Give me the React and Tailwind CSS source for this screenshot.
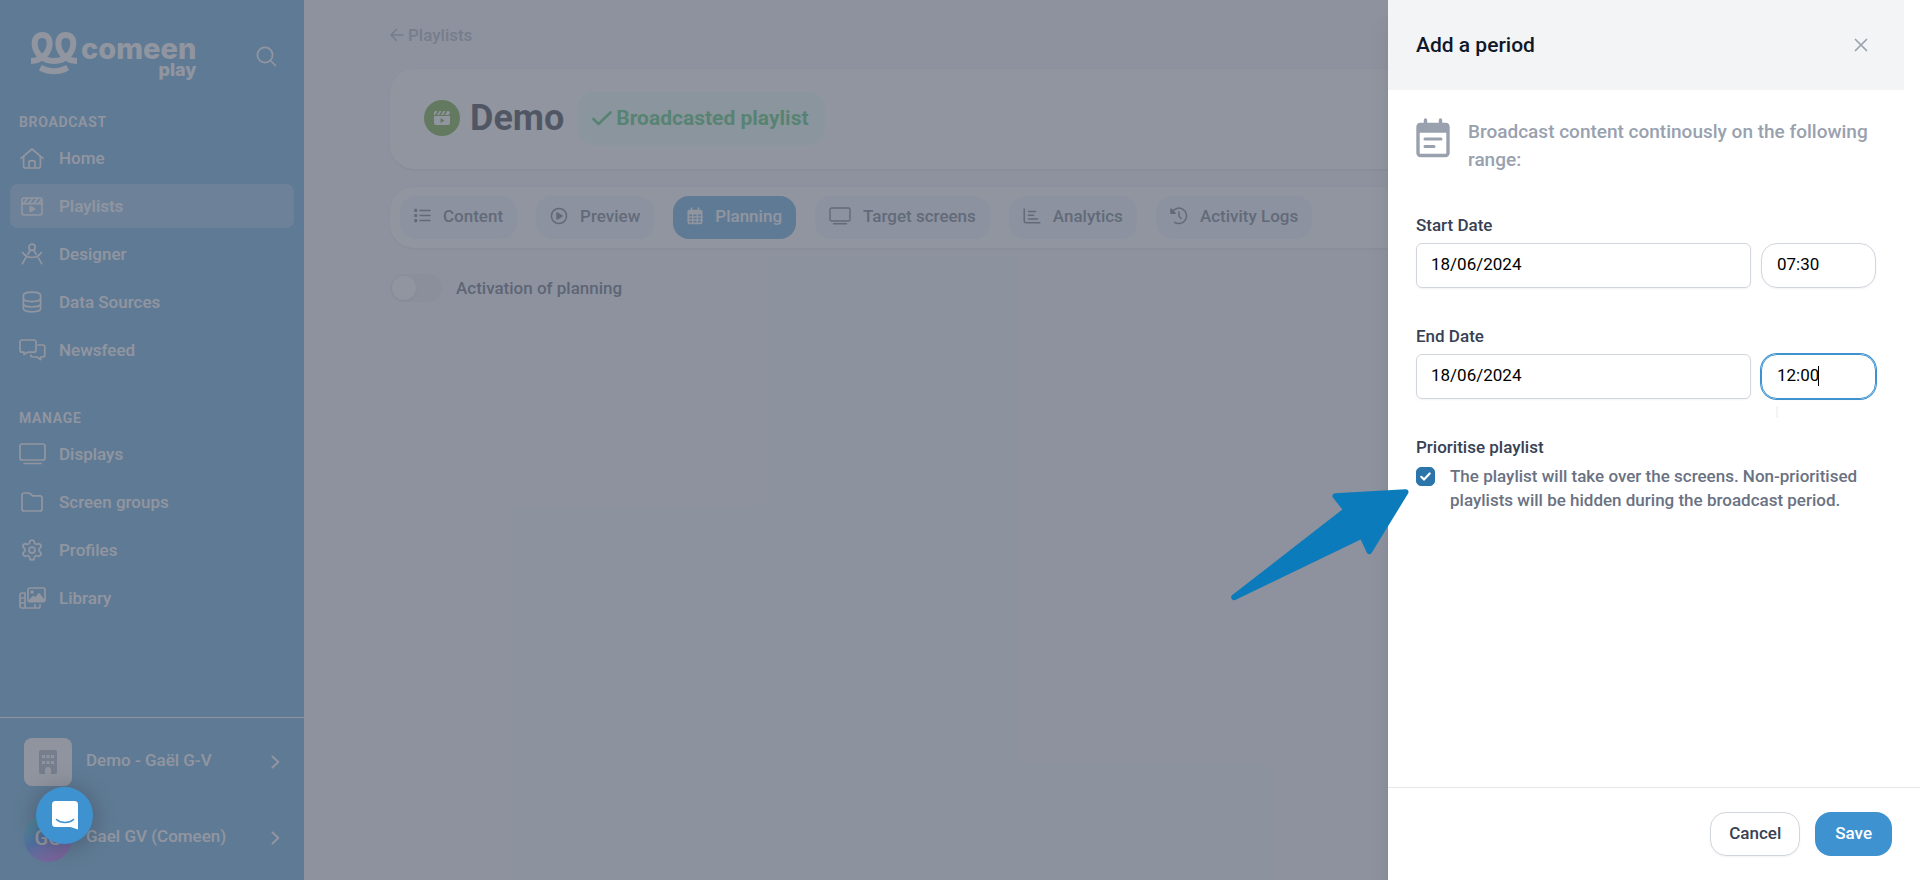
import { useState } from 'react'
import { Settings } from 'lucide-react'
import clsx from 'clsx'

function Svg({ w, h, stroke = 1.7, className, children }) {
  return (
    <svg
      width={w}
      height={h}
      viewBox={`0 0 ${w} ${h}`}
      fill="none"
      stroke="currentColor"
      strokeWidth={stroke}
      strokeLinecap="round"
      strokeLinejoin="round"
      className={clsx('shrink-0', className)}
      aria-hidden="true"
    >
      {children}
    </svg>
  )
}

const HomeIcon = () => (
  <Svg w={24} h={21}>
    <path d="M1 10.3 12 1l11 9.3" />
    <path d="M3.6 8.6V18a2 2 0 0 0 2 2h12.8a2 2 0 0 0 2-2V8.6" />
    <path d="M9 20v-6.2a1 1 0 0 1 1-1h4a1 1 0 0 1 1 1V20" />
  </Svg>
)

const ClapperIcon = () => (
  <Svg w={22} h={19}>
    <rect x="1" y="1" width="20" height="17" rx="2.2" />
    <path d="M1 6.6h20M3 6 6.6 1.4M8 6l3.6-4.6M13 6l3.6-4.6M18 6l2.6-3.4" />
    <path d="M9.3 9.6v5l4.2-2.5z" fill="currentColor" />
  </Svg>
)

const CompassIcon = () => (
  <Svg w={22} h={22}>
    <circle cx="11" cy="4.2" r="3.1" />
    <path d="M9.4 7 6.8 11.2M12.6 7l2.6 4.2M5 14.4 1.3 20.7M17.3 14.8l3.4 5.9M1.6 9.4c4.2 6.8 14.6 6.8 18.8 0" />
  </Svg>
)

const DatabaseIcon = () => (
  <Svg w={20} h={22}>
    <path d="M1.4 4.2c0-1.7 3.8-3 8.6-3s8.6 1.3 8.6 3v13.6c0 1.7-3.8 3-8.6 3s-8.6-1.3-8.6-3z" />
    <path d="M1.4 7.6c0 1.7 3.8 3 8.6 3s8.6-1.3 8.6-3M1.4 13c0 1.7 3.8 3 8.6 3s8.6-1.3 8.6-3" />
  </Svg>
)

const CommentsIcon = () => (
  <Svg w={27} h={22}>
    <path d="M3 1h12a2 2 0 0 1 2 2v8.2a2 2 0 0 1-2 2H8.6L5 15.6v-2.4H3a2 2 0 0 1-2-2V3a2 2 0 0 1 2-2z" />
    <path d="M19 6h4.800a2 2 0 0 1 2 2v8a2 2 0 0 1-2 2h-2.200v2.600L18 18h-4.400a2 2 0 0 1-1.900-2" />
  </Svg>
)

const ScreenIcon = () => (
  <Svg w={27} h={22}>
    <rect x="1" y="1" width="25" height="16" rx="2" />
    <path d="M5 20.5h17" />
  </Svg>
)

const FolderIcon = () => (
  <Svg w={22} h={20}>
    <path d="M3 1h4.800a2 2 0 0 1 1.400.600l1.600 1.600a2 2 0 0 0 1.400.600H19a2 2 0 0 1 2 2V17a2 2 0 0 1-2 2H3a2 2 0 0 1-2-2V3a2 2 0 0 1 2-2z" />
  </Svg>
)

const LibraryIcon = () => (
  <Svg w={27} h={22}>
    <rect x="9" y="1" width="17" height="13.6" rx="1.8" />
    <circle cx="13" cy="5" r=".9" fill="currentColor" />
    <path d="m10.400 13.600 4-4 2 1.800 3.600-4.600 5.200 6.800z" fill="currentColor" />
    <path d="M6 6H2.800A1.800 1.800 0 0 0 1 7.800v11.400A1.800 1.800 0 0 0 2.800 21h16.400a1.800 1.800 0 0 0 1.800-1.800V17.600M6 6v15M1.500 11H6M1.500 16H6M16 17.600V21" />
  </Svg>
)

const ListIcon = () => (
  <Svg w={17} h={15} stroke={1.5}>
    <path d="M6 2.500h10M6 7.500h10M6 12.500h10" />
    <path d="M1 1.600h1.400v1.600H1zM1 6.700h1.400v1.600H1zM1 11.800h1.400v1.600H1z" fill="currentColor" />
  </Svg>
)

const PlayIcon = () => (
  <Svg w={18} h={18} stroke={1.5}>
    <circle cx="9" cy="9" r="7.6" />
    <path d="M7 6v6l5-3z" fill="currentColor" />
  </Svg>
)

const CalendarIcon = () => (
  <Svg w={16} h={18} stroke={1.6}>
    <path d="M4.5 1v3M11.5 1v3" />
    <rect x="1.3" y="3.6" width="13.4" height="12.8" rx="1.4" />
    <path d="M1.500 4h13v2.600h-13z" fill="currentColor" />
    <path d="M1.300 10h13.400M1.300 13h13.400M5.800 7v9M10.200 7v9" strokeWidth="1.4" />
  </Svg>
)

const ScreenSmallIcon = () => (
  <Svg w={22} h={18} stroke={1.4}>
    <rect x="1" y="1" width="20" height="13" rx="1.6" />
    <path d="M4.500 16.800h13" />
  </Svg>
)

const ChartIcon = () => (
  <Svg w={18} h={16} stroke={1.5}>
    <path d="M1.200 1v11.800a2 2 0 0 0 2 2h13.600M5.500 3.500h7M5.500 7.200h5M5.500 11h9" />
  </Svg>
)

const HistoryIcon = () => (
  <Svg w={18} h={18} stroke={1.5}>
    <path d="M2 5.200A7.700 7.700 0 1 1 4.600 15.300M9 5v4.300l2.200 2.200" />
    <path d="M1 2v4.200h4.200z" fill="currentColor" />
  </Svg>
)

const ChevronIcon = () => (
  <Svg w={9} h={14} stroke={2}>
    <path d="m1.500 1.500 5.800 5.500-5.800 5.500" />
  </Svg>
)

const Logo = () => (
  <div className="flex items-start gap-1 text-white">
    <svg width="46" height="43" viewBox="0 0 138 129" fill="none" stroke="currentColor" strokeWidth="18" aria-hidden="true">
      <path d="M0 87C32 87 56 62 56 34C56 18 47 9 34 9S11 18 11 34C11 62 34 87 69 87S127 62 127 34C127 18 118 9 104 9S82 18 82 34C82 62 106 87 138 87" />
      <path d="M28 107C52 121 86 121 110 107" />
    </svg>
    <div className="flex flex-col items-end pt-0.5 font-[Inter] font-extrabold">
      <span className="text-[29px] leading-[30px]">comeen</span>
      <span className="-mt-1 text-lg leading-5">play</span>
    </div>
  </div>
)

const broadcast = [
  { label: 'Home', icon: <HomeIcon /> },
  { label: 'Playlists', icon: <ClapperIcon />, active: true },
  { label: 'Designer', icon: <CompassIcon /> },
  { label: 'Data Sources', icon: <DatabaseIcon /> },
  { label: 'Newsfeed', icon: <CommentsIcon /> },
]

const manage = [
  { label: 'Displays', icon: <ScreenIcon /> },
  { label: 'Screen groups', icon: <FolderIcon /> },
  { label: 'Profiles', icon: <Settings size={24} strokeWidth={1.75} /> },
  { label: 'Library', icon: <LibraryIcon /> },
]

const tabs = [
  { label: 'Content', icon: <ListIcon /> },
  { label: 'Preview', icon: <PlayIcon /> },
  { label: 'Planning', icon: <CalendarIcon />, active: true },
  { label: 'Target screens', icon: <ScreenSmallIcon /> },
  { label: 'Analytics', icon: <ChartIcon /> },
  { label: 'Activity Logs', icon: <HistoryIcon /> },
]

function NavGroup({ title, items, className }) {
  return (
    <div className={className}>
      <h2 className="px-[9px] text-sm font-semibold uppercase tracking-wider text-white">{title}</h2>
      <ul className="mt-1 flex flex-col gap-1">
        {items.map((item) => (
          <li key={item.label}>
            <a
              href="#"
              className={clsx(
                'flex h-11 items-center gap-3.5 rounded-lg px-[9px] text-white',
                item.active && 'bg-[#74b5e4]'
              )}
            >
              <span className="flex w-[26px] justify-center">{item.icon}</span>
              {item.label}
            </a>
          </li>
        ))}
      </ul>
    </div>
  )
}

function Sidebar() {
  return (
    <aside className="flex w-[304px] shrink-0 flex-col bg-[#3f92d0] font-medium text-white">
      <div className="flex h-[76px] items-start justify-between pt-8 pr-[27px] pl-[31px]">
        <Logo />
        <button aria-label="Search" className="mt-3.5">
          <Svg w={21} h={21} stroke={1.7}>
            <circle cx="9" cy="9" r="7.6" />
            <path d="m14.500 14.500 5 5" />
          </Svg>
        </button>
      </div>
      <nav className="flex-1 px-2.5 pt-9">
        <NavGroup title="Broadcast" items={broadcast} />
        <NavGroup title="Manage" items={manage} className="mt-9" />
      </nav>
      <div className="flex flex-col gap-7 border-t border-white px-6 pt-5 pb-[18px]">
        <button className="flex h-12 items-center gap-3.5 text-left">
          <span className="flex size-12 items-center justify-center rounded-lg bg-gray-50 text-gray-400">
            <svg width="18" height="24" viewBox="0 0 18 24" fill="currentColor" fillRule="evenodd" aria-hidden="true">
              <path d="M2 0h14a2 2 0 0 1 2 2v20a2 2 0 0 1-2 2h-4v-4a3 3 0 0 0-6 0v4H2a2 2 0 0 1-2-2V2a2 2 0 0 1 2-2zM3 5v3h3V5zm4.500 0v3h3V5zM12 5v3h3V5zM3 11v3h3v-3zm4.500 0v3h3v-3zm4.500 0v3h3v-3z" />
            </svg>
          </span>
          <span className="flex-1 pb-1">Demo - Gaël G-V</span>
          <ChevronIcon />
        </button>
        <button className="flex h-12 items-center gap-3.5 text-left">
          <span className="flex size-12 items-center justify-center rounded-full bg-linear-150 from-teal-400 via-blue-600 to-fuchsia-600 text-xl">GG</span>
          <span className="flex-1 pb-1">Gael GV (Comeen)</span>
          <ChevronIcon />
        </button>
      </div>
    </aside>
  )
}

function Main() {
  return (
    <main className="min-w-0 flex-1 bg-gray-100 px-[86px] pt-[23px] font-medium">
      <a href="#" className="flex items-center gap-1 text-gray-400">
        <Svg w={14} h={14} stroke={1.7}>
          <path d="M13 7H1M6.500 1.500 1 7l5.500 5.500" />
        </Svg>
        Playlists
      </a>

      <section className="mt-[22px] flex h-25 items-center rounded-3xl bg-white px-[34px] pb-0.5 shadow-sm">
        <span className="flex size-9 items-center justify-center rounded-full bg-[#509200] text-white">
          <svg width="16" height="14" viewBox="0 0 16 14" fill="currentColor" fillRule="evenodd" aria-hidden="true">
            <path d="M2 0h1.500L1 4H0V2a2 2 0 0 1 2-2zM5.500 0h2L5 4H3zM9.500 0h2L9 4H7zM13.500 0h.500a2 2 0 0 1 2 1.500L14.500 4H11zM0 5h16v7a2 2 0 0 1-2 2H2a2 2 0 0 1-2-2zM6.500 7v5l4-2.500z" />
          </svg>
        </span>
        <h1 className="ml-2.5 text-4xl font-bold text-gray-950">Demo</h1>
        <span className="ml-3.5 flex h-[53px] items-center gap-1 rounded-2xl bg-emerald-50 pr-4 pl-3.5 text-[21px] font-bold text-[#18b848]">
          <Svg w={20} h={15} stroke={2.6}>
            <path d="m1.500 8 5 5L18.500 1.500" />
          </Svg>
          Broadcasted playlist
        </span>
      </section>

      <nav className="mt-[18px] flex h-[61px] items-center gap-[19px] rounded-3xl bg-white px-2.5 shadow-sm">
        {tabs.map((tab) => (
          <button
            key={tab.label}
            className={clsx(
              'flex h-[43px] items-center gap-3 rounded-2xl px-3.5 pb-1 whitespace-nowrap',
              tab.active ? 'bg-[#3f92d0] text-white' : 'bg-[#edf3fa] text-gray-600'
            )}
          >
            {tab.icon}
            {tab.label}
          </button>
        ))}
      </nav>

      <label className="mt-[26px] flex items-center gap-3.5 text-gray-700">
        <input type="checkbox" role="switch" className="peer sr-only" />
        <span className="h-7 w-[52px] rounded-full bg-gray-200 p-0.5">
          <span className="block size-6 rounded-full bg-white shadow-sm" />
        </span>
        Activation of planning
      </label>
    </main>
  )
}

function DateRow({ id, label, date, time, focused }) {
  return (
    <div>
      <label htmlFor={id} className="block leading-6 text-gray-700">{label}</label>
      <div className="mt-1.5 flex gap-2.5 font-normal">
        <input
          id={id}
          defaultValue={date}
          className="h-[45px] min-w-0 flex-1 rounded-md border border-gray-300 px-3.5 pb-1 text-black shadow-xs"
        />
        <div className="relative">
          <input
            aria-label={`${label} time`}
            defaultValue={time}
            className={clsx(
              'h-[45px] w-[115px] rounded-2xl border px-[15px] pb-1 text-black shadow-xs outline-none',
              focused ? 'border-[#3f92d0] ring-1 ring-[#3f92d0]' : 'border-gray-300'
            )}
          />
          {focused && (
            <>
              <span className="absolute top-3 left-[57px] h-5 w-px bg-black" />
              <span className="absolute top-[52px] left-[15px] h-3 w-0.5 bg-gray-100" />
            </>
          )}
        </div>
      </div>
    </div>
  )
}

const Arrow = () => (
  <svg className="pointer-events-none absolute top-[489px] -left-[157px]" width="178" height="112" viewBox="92 86 534 336" aria-hidden="true">
    <path
      d="M101 411 438 149 405 107 616 95 507 273 485 226z"
      fill="#0b7bbb"
      stroke="#0b7bbb"
      strokeWidth="17"
      strokeLinejoin="round"
    />
  </svg>
)

function PeriodDrawer() {
  const [priority, setPriority] = useState(true)

  return (
    <div className="relative flex w-[532px] flex-col bg-white font-medium shadow-xl" role="dialog" aria-labelledby="drawer-title">
      <div className="flex-1 pr-4">
        <header className="flex h-[90px] items-center justify-between bg-gray-100 pr-9 pl-7">
          <h2 id="drawer-title" className="text-[21px] text-gray-900">Add a period</h2>
          <button aria-label="Close" className="text-gray-400">
            <Svg w={14} h={14} stroke={1.7}>
              <path d="m1.500 1.500 11 11M12.500 1.500l-11 11" />
            </Svg>
          </button>
        </header>

        <div className="px-7 pt-7">
          <div className="flex items-start gap-[18px] text-gray-400">
            <Svg w={34} h={40} stroke={3.4}>
              <path d="M9.500 2v5M24.500 2v5" />
              <rect x="2" y="6.5" width="30" height="31" rx="2.5" />
              <path d="M3 7h28v6H3z" fill="currentColor" />
              <path d="M9 21h16M9 28.500h9" strokeWidth="3" />
            </Svg>
            <p className="text-[19px] leading-7">Broadcast content continously on the following range:</p>
          </div>

          <div className="mt-[39px] flex flex-col gap-9">
            <DateRow id="start" label="Start Date" date="18/06/2024" time="07:30" />
            <DateRow id="end" label="End Date" date="18/06/2024" time="12:00" focused />
          </div>

          <div className="mt-9">
            <label htmlFor="priority" className="block leading-6 text-gray-700">Prioritise playlist</label>
            <div className="mt-[5px] flex gap-[15px]">
              <span className="relative mt-[3px] size-[19px] shrink-0">
                <input
                  id="priority"
                  type="checkbox"
                  checked={priority}
                  onChange={(e) => setPriority(e.target.checked)}
                  className="peer block size-[19px] appearance-none rounded-[5px] border border-gray-300 checked:border-[#2b75ab] checked:bg-[#2b75ab]"
                />
                <Svg w={11} h={9} stroke={2.2} className="pointer-events-none absolute top-[5px] left-1 hidden text-white peer-checked:block">
                  <path d="m1.300 4.800 2.700 2.700L9.700 1.500" />
                </Svg>
              </span>
              <p className="leading-6 text-gray-500">
                The playlist will take over the screens. Non-prioritised playlists will be hidden during the broadcast period.
              </p>
            </div>
          </div>
        </div>
      </div>

      <footer className="flex justify-end gap-[15px] border-t border-gray-200 py-6 pr-7">
        <button className="h-11 rounded-2xl border border-gray-300 px-[18px] pb-0.5 text-gray-700 shadow-xs">Cancel</button>
        <button className="h-11 rounded-2xl bg-[#3f92d0] px-5 pb-0.5 text-white">Save</button>
      </footer>
      <Arrow />
    </div>
  )
}

export default function App() {
  return (
    <div className="relative flex h-screen overflow-hidden font-[Roboto,sans-serif] text-[17px] leading-6">
      <Sidebar />
      <Main />
      <div className="absolute inset-0 flex justify-end bg-[#6b7280]/75">
        <PeriodDrawer />
      </div>
      <button
        aria-label="Open chat"
        className="absolute bottom-9 left-9 flex size-[57px] items-center justify-center rounded-full bg-[#3f92d0] shadow-[0_2px_24px_rgba(0,0,0,0.25)]"
      >
        <svg width="26" height="29" viewBox="0 0 26 29" aria-hidden="true">
          <path d="M3.500 0h19A3.500 3.500 0 0 1 26 3.500V28.500L18.500 26h-15A3.500 3.500 0 0 1 0 22.500v-19A3.500 3.500 0 0 1 3.500 0z" fill="#fff" />
          <path d="M4.500 18.500c4.500 4 12.500 4 17 0" fill="none" stroke="#3f92d0" strokeWidth="1.6" strokeLinecap="round" />
        </svg>
      </button>
    </div>
  )
}
